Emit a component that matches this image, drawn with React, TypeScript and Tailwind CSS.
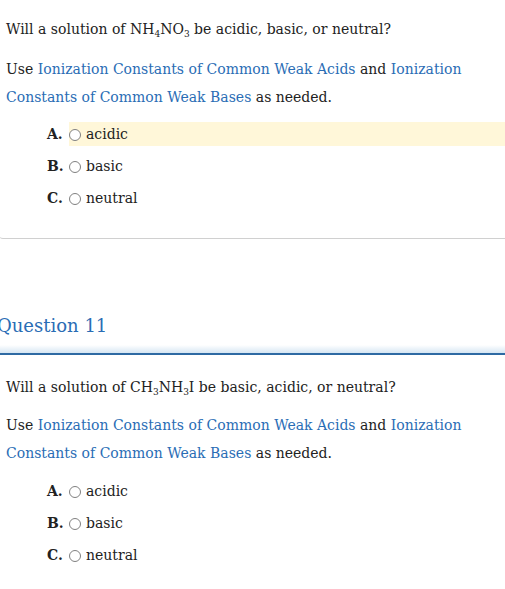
import React from "react";

const serif = { fontFamily: '"DejaVu Serif", Georgia, serif' };

function Sub({ children }: { children: React.ReactNode }) {
  return <sub className="text-[9px] relative top-[3px] align-baseline">{children}</sub>;
}

function Radio() {
  return <span className="inline-block w-[12px] h-[12px] rounded-full border border-[#808080] bg-white mr-[5px] relative top-[1px]" />;
}

function Option({ letter, label, hl }: { letter: string; label: string; hl?: boolean }) {
  return (
    <div className="flex items-center h-[24px] pl-[49px]">
      <span className="font-bold text-[#222] w-[22px]">{letter}</span>
      <div className={"flex items-center flex-1 h-[24px] " + (hl ? "bg-[#fff7d9]" : "")}>
        <Radio />
        <span className="text-[#222]">{label}</span>
      </div>
    </div>
  );
}

function Links({ mt }: { mt: string }) {
  return (
    <p className={"leading-[28px] " + mt}>
      Use <span className="text-[#2a6db5]">Ionization Constants of Common Weak Acids</span> and{" "}
      <span className="text-[#2a6db5]">Ionization Constants of Common Weak Bases</span> as needed.
    </p>
  );
}

export default function App() {
  return (
    <div className="w-[505px] h-[589px] overflow-hidden bg-white text-[14px] text-[#222]" style={serif}>
      <div className="pt-[16px] pl-[6px] border-b border-[#d0d0d0] rounded-bl-[5px] ml-[-2px] h-[239px]">
        <div className="pl-[2px]">
          <p className="leading-[26px]">
            Will a solution of NH<Sub>4</Sub>NO<Sub>3</Sub> be acidic, basic, or neutral?
          </p>
          <Links mt="mt-[13px]" />
          <div className="mt-[11px] flex flex-col gap-[8px] ml-[-8px]">
            <Option letter="A." label="acidic" hl />
            <Option letter="B." label="basic" />
            <Option letter="C." label="neutral" />
          </div>
        </div>
      </div>
      <div className="mt-[74px] ml-[-3px] text-[18px] text-[#2a6db5] leading-[26px]">Question 11</div>
      <div className="mt-[6px] h-[8px] bg-gradient-to-b from-white to-[#d6e6f3]" />
      <div className="h-[2px] bg-[#2e6aa3]" />
      <div className="pt-[19px] pl-[6px]">
        <p className="leading-[26px]">
          Will a solution of CH<Sub>3</Sub>NH<Sub>3</Sub>I be basic, acidic, or neutral?
        </p>
        <Links mt="mt-[11px]" />
        <div className="mt-[12px] flex flex-col gap-[8px] ml-[-8px]">
          <Option letter="A." label="acidic" />
          <Option letter="B." label="basic" />
          <Option letter="C." label="neutral" />
        </div>
      </div>
    </div>
  );
}
